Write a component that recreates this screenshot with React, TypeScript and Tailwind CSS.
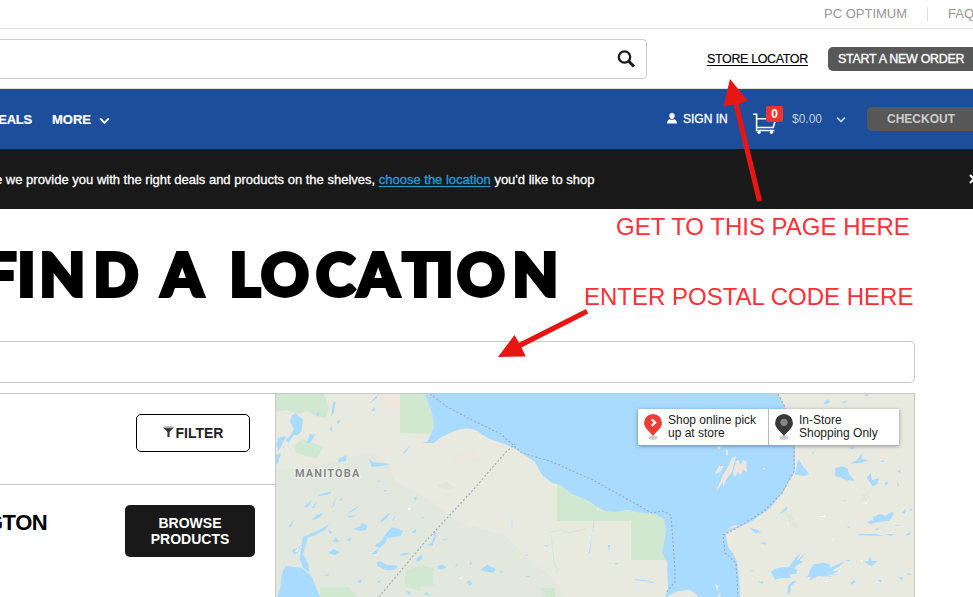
import React from "react";

const heavy = "[-webkit-text-stroke:0.3px_currentColor]";

function Chevron({ className }: { className: string }) {
  return (
    <svg viewBox="0 0 12 8" className={className} fill="none" stroke="currentColor" strokeWidth="2">
      <path d="M1.3 1.2 6 6l4.7-4.8" />
    </svg>
  );
}

function Cart() {
  return (
    <svg viewBox="0 0 24 22" className="h-[22px] w-6" fill="none" stroke="#fff" strokeWidth="1.6">
      <path d="M0 1.300h3.600v13.200h16.600L23 5M3.600 5.800h18M3.600 14.500v3h17.800" />
      <circle cx="6" cy="19.300" r="1.700" fill="#fff" stroke="none" />
      <circle cx="18.500" cy="19.300" r="1.700" fill="#fff" stroke="none" />
    </svg>
  );
}

function Pin({ color, children }: { color: string; children: React.ReactNode }) {
  return (
    <svg viewBox="0 0 18 27" className="h-[27px] w-[18px] shrink-0">
      <path d="M4.500 22.500C6 21.500 12 21.500 13.500 22.500v1.800c-1.500 2.300-7.500 2.300-9 0Z" fill="#ccc" />
      <path d="M9 0a8.900 8.900 0 0 0-8.900 8.900c0 4.500 4.500 7.600 8.900 13 4.400-5.400 8.900-8.500 8.900-13A8.900 8.900 0 0 0 9 0Z" fill={color} />
      {children}
    </svg>
  );
}

// Letter cells of the display heading: glyph and advance in pixels.
const headline: [string, number][] = [
  ["F", 34.5], ["I", 22], ["N", 54], ["D", 51], [" ", 17], ["A", 50], [" ", 18],
  ["L", 31.5], ["O", 55], ["C", 41.5], ["A", 45], ["T", 33], ["I", 21.5], ["O", 55.5], ["N", 50],
];

const westLakes =
  "M50 75l12-5 10 10 12 8-4 35-12 12h-12l-16 25-10-15-14 30-12-8 4-22 20-8 8 10 12-12 8-18-10-20ZM105 132l12 2 5-6-8 18-6 10-14 4ZM5 170l12-5-5 18ZM0 195l18-5-9 30-9 5ZM190 207l25-12-3 18-22 3ZM282 207l12 10 52 5-12 4-44 5ZM378 195l26-28-10 18ZM280 43l33-33-10 16ZM122 70l12-5-5 15ZM174 37l8-2-5 30-9 15ZM290 63l8-14 2 14ZM165 115l7-7-3 22ZM185 93l12-4-8 15ZM130 314l40-10-5 9-36 5ZM90 347l20-18-7 18-12 6ZM110 354l16-21-9 21ZM170 354l14-38-8 34ZM190 333l12-11-4 10ZM222 365l32-19-12 12-20 12ZM213 378l36-2-22 7ZM108 392l16-17 21-6-13 15-29 9ZM40 412l20-27-12 25ZM235 417l20-8 6-10 16 6-5 15-15 3ZM317 390l20-17 10-3-12 15-19 14ZM352 390l10-15-8 20ZM415 325l10-5-2 14ZM410 427l14-10-3 14ZM437 384l13-4-4 5ZM332 432l18-20 15 3 20 8-10 15-38 7-6 14-17 14-16-5 22-16ZM103 432l30-12 30-18-12 17-30 16-18 6ZM84 440l20-6-10 22-9 35 16 35 2 20-18-12-11-26ZM50 480l18-5 9-10-8 22-10 8ZM160 489l15-12 20 10-15 9ZM172 455l11-14 10 15ZM215 450l12-8-2 14ZM160 418l12 10-8 3ZM288 492l24-18-8 18ZM305 517l12-3 18 10 34 3-10 12-25 2-26-13ZM375 493l20-5 12 4-30 5ZM425 503l15-9 3 13-18 9ZM455 465l14-5 7-18 12-12-9 20-6 18ZM485 530l15-7 15 8-17 9ZM540 530l10-12-4 12ZM583 524l5-12 2 12ZM617 538l20-13 25 12-7 11-29-5ZM575 577l8-8 9 13-9 5ZM393 604l18 2-11 8ZM445 613l12-8 6 12ZM145 556l18-4-5 6ZM245 574l15-5-3 12ZM305 575l15-6-8 10ZM500 450l20-6-12 7ZM470 435l20-15-10 15ZM325 300l13 0-9 6ZM305 272l13 0-5 4Z";

const eastLakes =
  "M285 252l10-45 15 23 18 22-15 6-25-4ZM405 235l20-6 17 5 5 18 18 20-28-1-20-10-12-3ZM450 221l22-12 12-17 2 15 22 4-28 8ZM500 263l12-13 4 20 20-5-3 17-15 7-10-15ZM552 280l13-7-4 13ZM592 273l6 12-5 5ZM593 243l10-4-3 11ZM537 215l15-6-2 7ZM446 173l18-4-5 10ZM335 188l7-3v6ZM520 380l20-8 16 5 20-12 5 6-12 21-35 4-15-5ZM502 397l12-7 20 6-22 6ZM237 375l10-13 12-12 4 7-20 14ZM148 414l28 6 7 7-17 3ZM180 460l15-5 3 9ZM212 545l12-8 20-5 20 0 8-7 14-22 17-15-12 22 20 5-18 10-12 10 10 5-3 12-18 0 2 12-28 0-20 5-5-12ZM290 515l28-31-20 30ZM327 546l13-23 35-5 16 7 0 8 43-20-17 17-24 14 25-1-20 8 20 2-35 1 14 6-44-2-25 14 5-12-12 0 8-12ZM490 514l15 0 4-16 7 14 16 2-17 14-12-6ZM450 579l12-8 5 6-12 7ZM435 510l17 0-7 5ZM580 405l23-1-10 4ZM605 368l13-12-3 15ZM615 435l16-9-3 10ZM475 432l50 0 28 5-30 0-46-1ZM555 432l30 0-13 6ZM533 570l12 0-4 7ZM595 561l15 0-5 10ZM618 551l16 0-5 5ZM625 357l14-1-4 6ZM150 541l13 1-7 2ZM278 574l12 0-17 13-3 24-8 0 2-24ZM173 573l20 3-8 5ZM428 330l10 0-4 3ZM440 408l12 2-5 5ZM525 420l12-9-4 10ZM370 40l12-13 8 9-14 8ZM490 15l18-3-7 7ZM425 38l15-8-5 10Z";

function MapArt() {
  return (
    <svg viewBox="276 394 638 203" className="block h-[203px] w-[638px] bg-[#e8eae0]">
      <path d="M276 470 330 463 372 452 388 463 394 480 430 500 460 523 505 535 540 570 560 597H276Z" fill="#e2e8de" />
      <path d="M500 548 520 555 550 575 565 597H490Z" fill="#e2e8de" />
      <path d="M375 394h25v20l-12-4Z" fill="#efe7de" />
      <path d="M452 457 475 448 481 462 450 462Z" fill="#ebe7dd" />
      <path d="M436 486l10-4 10 6-8 3ZM783 510l8 5 8 13-7-1ZM861 496l9-6-3 10-7 2Z" fill="#dfe6da" />
      <path d="M276 394h48l5 14-3 10-10-2-8-5-10 3-12-4-10 2ZM400 394h35v35l-4 5-31-1ZM294 446l8-7 22 8-8 12-20-6ZM320 587l28 0 10 10H320ZM405 570l17-4 12 2-1 18-13 1v4l-15-5Z" fill="#d1e8d0" />
      <path d="M557 483h9l16 12 18 12 25 4h30l12 7v42h-36v-39h-74Z" fill="#d1e8d0" />
      <path d="M540 588h15v9h-10Z" fill="#d1e8d0" />
      <path
        d="M425 394C430 407 434 415 434 427C432 433 429 438 427 442C437 440 447 434 455 431C465 427 473 428 480 433C487 439 496 441 507 445L517 450L535 462L542 475L552 483L560 485L572 494L587 500L597 507L605 511L615 512L628 510L642 513L655 514L664 519L666 530L664 542L662 553L667 562L668 589L665 597H740L739 577L737 562L733 553L728 547L726 535C740 527 750 523 758 517L771 508L783 494L793 478L796 465L796 445L787 411L778 394Z"
        fill="#a9dbff"
      />
      <path d="M666 597l12-6 12-1 6 4 2 3Z" fill="#e8eae0" />
      <path d="M796 445v27l-13 22-13 16-16 12-28 12M728 536l3 13 7 7" fill="none" stroke="#f0e7df" strokeWidth="2" />
      <path d="M597 507v3l6 1ZM715 473l4-7 5 0-4 6-5 2ZM723 475l5-8 4-9 4-2-4 16-5 6-4 9 0-5-7 10ZM733 473l3-12 2-1 3 5 2-5 3 1 1 12-4-4-2 6-3-3-3 5ZM726 450h2v5h-2ZM725 530l10-5 4 1ZM715 584l4 2-2 5ZM718 592l3 4-2 1ZM717 447l5-2-3 5ZM763 468h2v1h-2Z" fill="#efe7df" />
      <path d="M277 597C283 586 279 573 286 566l16 2 10 9 5 13 3 7Z" fill="#a9dbff" />
      <g transform="translate(275 390) scale(.33333)" fill="#a9dbff">
        <path d={westLakes} />
      </g>
      <g transform="translate(700 390) scale(.33333)" fill="#a9dbff">
        <path d={eastLakes} />
      </g>
      <path d="M500 570l3 2-2 1ZM525 555l3-1-1 2ZM544 545l4 0-1 2ZM585 556l5-3 2-20-3 20ZM608 545h2l-1 7ZM614 563h5l-2 2ZM635 579l10 1 9 2-3 0-16-2ZM648 582l7 0-2 1ZM525 576l5 0-2 1ZM430 441l12-5-8 7-12 0Z" fill="#a9dbff" />
      <path d="M512 519v9M594 520l-1 12" stroke="#b8dcf2" strokeWidth=".8" />
      <path d="M551 532l10-2 6 3 19-4M551 535l3 27 4 8-4 5" fill="none" stroke="#d1e8d0" strokeWidth="1" />
      <path d="M295 551l4-3-2 4ZM408 508l3 0-2 3ZM459 579l3-2-1 2ZM786 520l3 5-1 0ZM864 504l3-3v3ZM821 516h4v1h-4ZM832 538l2 2-1 0ZM860 560l3 1-1 1ZM824 581h3v1h-3Z" fill="#fff" />
      <path
        d="M430 394l19 14 25 13 27 13 21 19 28 8 43 19 59 33 11-2 8 4 4 55 0 12-9 11M379 597l45-54 49-53 32-37 10-9M778 394l9 17 7 35v25l-12 22-18 18-29 18-12 6 2 18 11 10 2 34"
        fill="none"
        stroke="#a3a8ae"
        strokeWidth="1.100"
        strokeDasharray="2 2"
      />
    </svg>
  );
}

export default function App() {
  return (
    <div className="relative flex h-[597px] w-[973px] flex-col overflow-hidden bg-white font-['Liberation_Sans',Arial,sans-serif] whitespace-nowrap text-black">
      <div className="flex h-[29px] shrink-0 items-start border-b border-[#e2e2e2] pl-[824px] text-[13px] text-[#969696]">
        <span className="mt-[5px] w-[103px] shrink-0 leading-[17px]">PC OPTIMUM</span>
        <span className="mt-[7px] h-[14px] w-[21px] shrink-0 border-l border-[#dcdcdc]" />
        <span className="mt-[5px] leading-[17px]">FAQS</span>
      </div>

      <div className="flex h-[60px] shrink-0 items-center border-b border-[#dedede]">
        <div className="-ml-2 flex h-10 w-[655px] shrink-0 items-center justify-end rounded-[4px] border border-[#ccc] pr-[10px]">
          <svg viewBox="0 0 18 18" className="h-[18px] w-[19px]" fill="none" stroke="#191919">
            <circle cx="7" cy="7" r="5.700" strokeWidth="2.300" />
            <path d="m11 11 5.500 5.500" strokeWidth="3" />
          </svg>
        </div>
        <a className="mt-[2px] ml-[60px] w-[121px] shrink-0 text-[12.500px] leading-[17px] tracking-[-0.360px] underline underline-offset-2 [-webkit-text-stroke:0.15px_currentColor]">STORE LOCATOR</a>
        <button className={`h-6 w-[160px] shrink-0 rounded-[5px] bg-[#585858] pl-[10px] text-left text-[12.500px] leading-6 tracking-[-0.290px] text-white ${heavy}`}>START A NEW ORDER</button>
      </div>

      <nav className="flex h-[60px] shrink-0 items-center bg-[#1d4e9b] text-white">
        <span className="mt-[2px] -ml-[11px] w-[63px] shrink-0 text-[13px] font-bold tracking-[-0.200px] [-webkit-text-stroke:0.2px_currentColor]">DEALS</span>
        <span className="mt-[2px] w-[47px] shrink-0 text-[13px] font-bold [-webkit-text-stroke:0.2px_currentColor]">MORE</span>
        <Chevron className="mt-[3px] h-2 w-[11px] shrink-0" />
        <svg viewBox="0 0 10 11" className="ml-[557px] -mt-[1px] h-[11px] w-[10px] shrink-0" fill="#fff">
          <path d="M5 0a2.700 2.700 0 0 0-2.700 2.800C2.300 4.500 3.400 6 5 6s2.700-1.500 2.700-3.200A2.700 2.700 0 0 0 5 0ZM0 10.500C0 7.800 1.500 6.500 3 6.300c1.200.7 2.800.7 4 0 1.500.2 3 1.500 3 4.200Z" />
        </svg>
        <span className={`ml-[6px] w-[70px] shrink-0 text-[12px] ${heavy}`}>SIGN IN</span>
        <span className="relative mt-[9px] w-[39px] shrink-0">
          <Cart />
          <span className="absolute -top-[7px] left-[13px] h-4 w-[17px] rounded-[2px] bg-[#f03332] text-center text-[12px] leading-4 font-bold">0</span>
        </span>
        <span className="w-[44px] shrink-0 text-[12px] text-[#c3ccda]">$0.00</span>
        <Chevron className="mt-[2px] h-2 w-[10px] shrink-0 text-[#c3ccda]" />
        <button className="ml-[21px] h-6 w-[120px] shrink-0 rounded-[5px] bg-[#585858] pl-5 text-left text-[12px] leading-6 font-bold text-[#ccc]">CHECKOUT</button>
      </nav>

      <div className={`flex h-[60px] shrink-0 items-center bg-[#191919] text-[13px] text-white ${heavy}`}>
        <p className="mt-[2px] -ml-[5px] w-[974px] shrink-0">
          e we provide you with the right deals and products on the shelves,{" "}
          <a className="text-[#1e9fe0] underline underline-offset-2">choose the location</a> you'd like to shop
        </p>
        <svg viewBox="0 0 10 10" className="h-[10px] w-[10px] shrink-0" stroke="#fff" strokeWidth="2.200">
          <path d="m1 1 8 8M9 1 1 9" />
        </svg>
      </div>

      <h1 className="-ml-[17px] mt-[25px] flex h-[80px] shrink-0 font-['Lato',sans-serif] text-[59px] leading-[80px] font-black [-webkit-text-stroke:3.800px_black]">
        {headline.map(([letter, width], i) => (
          <span key={i} className="shrink-0 whitespace-pre" style={{ width }}>{letter}</span>
        ))}
      </h1>

      <div className="-ml-2 mt-[27px] h-[42px] w-[923px] shrink-0 rounded-[5px] border border-[#c8c8c8] bg-white" />

      <div className="mt-[10px] flex h-[204px] w-[915px] shrink-0 border-t border-r border-[#c8c8c8]">
        <section className="flex w-[276px] shrink-0 flex-col border-r border-[#c8c8c8]">
          <div className="flex h-[91px] shrink-0 justify-end border-b border-[#c8c8c8] pt-5 pr-[25px]">
            <button className="flex h-[38px] w-[114px] items-center justify-center rounded-[5px] border border-black text-[14px] font-bold text-[#222]">
              <svg viewBox="0 0 11 11" className="-mt-[3px] mr-[2px] h-[11px] w-[11px]">
                <path d="M0 1.200h11L6.600 6v5H4.400V6Z" fill="#333" />
                <ellipse cx="5.500" cy="1.300" rx="5" ry="1" fill="#aaa" />
              </svg>
              FILTER
            </button>
          </div>
          <div className="flex justify-between pt-5 pr-5">
            <h2 className="-ml-[14px] mt-[4px] text-[22px] leading-7 font-bold tracking-[-0.500px]">GTON</h2>
            <button className="h-[52px] w-[130px] rounded-[5px] bg-[#191919] text-[14px] leading-4 font-bold text-white">
              BROWSE
              <br />
              PRODUCTS
            </button>
          </div>
        </section>
        <section className="relative w-[638px] shrink-0">
          <MapArt />
          <span className="absolute top-[73px] left-[19px] font-['Roboto',sans-serif] text-[11px] leading-[14px] font-bold tracking-[1.100px] text-[#858585] [paint-order:stroke_fill] [-webkit-text-stroke:2px_#f4f5f0]">MANITOBA</span>
          <div className="absolute top-[15px] left-[362px] flex h-9 w-[261px] bg-white text-[12px] leading-[13px] text-[#222] shadow-[0_1px_4px_rgba(0,0,0,0.4)]">
            <div className="flex w-[131px] shrink-0 border-r border-[#bbb] pt-[5px] pl-[6px]">
              <Pin color="#f23b32">
                <path d="m7.700 5.300 3.500 3.300-3.500 3.300" fill="none" stroke="#fff" strokeWidth="2.200" />
              </Pin>
              <span className="ml-[6px]">Shop online pick<br />up at store</span>
            </div>
            <div className="flex pt-[5px] pl-[6px]">
              <Pin color="#383838">
                <circle cx="9" cy="8.300" r="3.600" fill="#858585" />
              </Pin>
              <span className="ml-[6px]">In-Store<br />Shopping Only</span>
            </div>
          </div>
        </section>
      </div>

      <span className="absolute top-[212px] left-[616px] text-[24px] leading-[30px] text-[#ff2f38]">GET TO THIS PAGE HERE</span>
      <span className="absolute top-[282px] left-[584px] text-[24px] leading-[30px] text-[#ff2f38]">ENTER POSTAL CODE HERE</span>
      <svg viewBox="0 0 973 597" className="pointer-events-none absolute inset-0 h-[597px] w-[973px]" fill="#e81613">
        <path d="m730 79 18 22-9.500 2.500L762 200.500l-5 1.200L733.500 104.500 723.500 106.500Z" />
        <path d="m498 357 16.500-22 4.500 7.700L586 309l2.200 4.500L521.500 347.500l4.300 9Z" />
      </svg>
    </div>
  );
}
